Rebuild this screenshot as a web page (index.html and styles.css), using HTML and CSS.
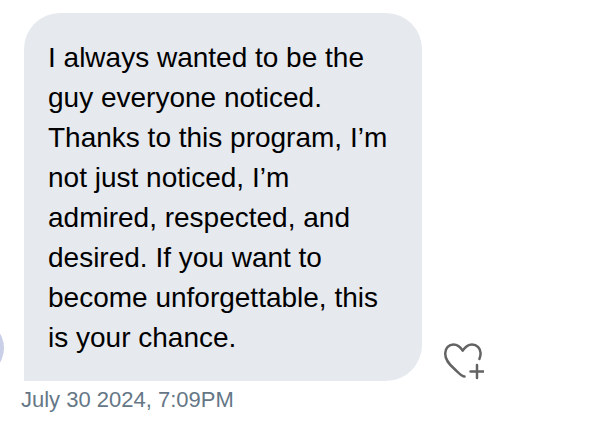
FILE: index.html
```html
<!DOCTYPE html>
<html lang="en">
<head>
<meta charset="utf-8">
<title>Message</title>
<link rel="stylesheet" href="styles.css">
</head>
<body>
<main class="thread">
  <div class="row">
    <div class="avatar"></div>
    <div class="bubble">I always wanted to be the<br>guy everyone noticed.<br>Thanks to this program, I’m<br>not just noticed, I’m<br>admired, respected, and<br>desired. If you want to<br>become unforgettable, this<br>is your chance.</div>
    <svg class="react" viewBox="0 0 42 40" width="42" height="40" fill="none" stroke="#636363" stroke-width="2.5" stroke-linecap="round" stroke-linejoin="round" aria-hidden="true">
      <path d="M22.5 35.5 C19.5 35.5 17 32 12 27.5 C7 23 3.2 19 3.2 12.5 C3.2 7 7 3.4 11.5 3.4 C15.5 3.4 18.5 6 20.7 9.7 C23 6 26 3.4 30 3.4 C35 3.4 38.6 7.5 38.6 12 C38.6 14 38.2 16 37.4 18"/>
      <path d="M35 24 V37 M28.5 30.5 H41.5"/>
    </svg>
  </div>
  <p class="time">July 30 2024, 7:09PM</p>
</main>
</body>
</html>
```
FILE: styles.css
```css
html, body {
  margin: 0;
  padding: 0;
  background: #fff;
  overflow: hidden;
}
.thread {
  padding-top: 13px;
  font-family: "Liberation Sans", Arial, sans-serif;
}
.row {
  display: flex;
  align-items: flex-end;
}
.avatar {
  flex: none;
  width: 56px;
  height: 56px;
  margin: 0 20px 5px -52px;
  border-radius: 50%;
  background: #c9cfe6;
}
.bubble {
  box-sizing: border-box;
  width: 398px;
  height: 368px;
  padding: 25px 24px 23px;
  background: #e6e9ee;
  border-radius: 36px 36px 36px 0;
  color: #000;
  font-size: 28px;
  line-height: 40px;
  white-space: nowrap;
}
.react {
  flex: none;
  margin: 0 0 0 20px;
}
.time {
  margin: 7px 0 0 21px;
  color: #657786;
  font-size: 22px;
  line-height: 24px;
}
```
